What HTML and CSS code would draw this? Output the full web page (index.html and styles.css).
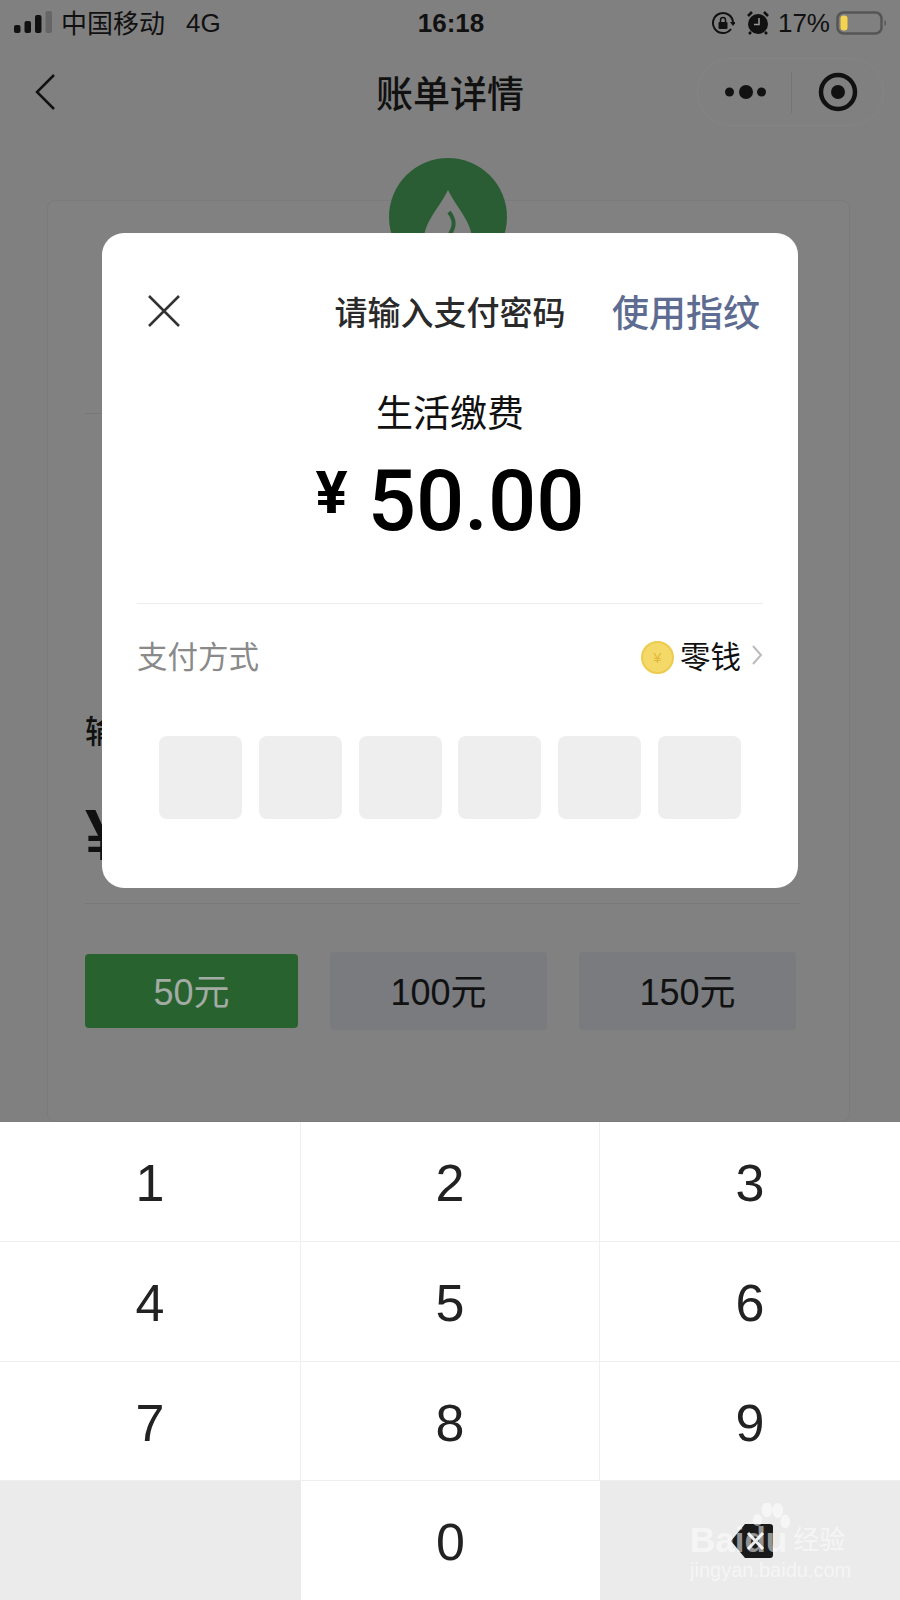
FILE: index.html
```html
<!DOCTYPE html>
<html lang="zh-CN">

<head>
    <meta charset="UTF-8">
    <meta name="viewport" content="width=device-width, initial-scale=1.0">
    <title>账单详情</title>
    <link rel="stylesheet" href="styles.css">
</head>

<body>
    <div class="phone">
        <div class="page">
            <div class="statusBar">
                <div class="statusLeft">
                    <svg class="signal" width="38" height="24" viewBox="0 0 38 24">
                        <rect x="0" y="14" width="6.5" height="8" rx="2" fill="#111"/>
                        <rect x="10.5" y="10" width="6.5" height="12" rx="2" fill="#111"/>
                        <rect x="21" y="4" width="6.5" height="18" rx="2" fill="#111"/>
                        <rect x="31.5" y="0" width="6.5" height="22" rx="2" fill="#666"/>
                    </svg>
                    <span class="carrier">中国移动</span>
                    <span class="network">4G</span>
                </div>
                <div class="clock">16:18</div>
                <div class="statusRight">
                    <svg width="24" height="24" viewBox="0 0 24 24" fill="none">
                        <path d="M20 18A10 10 0 1 1 22 12" stroke="#111" stroke-width="2"/>
                        <path d="M19 11h6l-3 4z" fill="#111"/>
                        <rect x="7.5" y="11" width="9" height="7" rx="1" fill="#111"/>
                        <path d="M9.5 11V9a2.5 2.5 0 0 1 5 0v2" stroke="#111" stroke-width="1.5"/>
                    </svg>
                    <svg class="alarm" width="22" height="24" viewBox="0 0 22 24" fill="none">
                        <circle cx="11" cy="13" r="10" fill="#111"/>
                        <path d="M12 7v6.5h-5" stroke="#999" stroke-width="1.5"/>
                        <path d="M1 5l4-4M21 5l-4-4M4 21l-2 2M18 21l2 2" stroke="#111" stroke-width="2.5"/>
                    </svg>
                    <span class="percent">17%</span>
                    <svg width="52" height="24" viewBox="0 0 52 24" fill="none">
                        <rect x="1.5" y="1.5" width="44" height="21" rx="6" stroke="#555" stroke-width="2.5"/>
                        <rect x="4.5" y="4.5" width="7" height="15" rx="3" fill="#f5d34f"/>
                        <path d="M48.5 9c2 1 2 5 0 6z" fill="#555"/>
                    </svg>
                </div>
            </div>
            <div class="navBar">
                <svg class="backIcon" width="22" height="38" viewBox="0 0 22 38" fill="none">
                    <path d="M20 2L3 19l17 17" stroke="#111" stroke-width="2.5"/>
                </svg>
                <div class="navTitle">账单详情</div>
                <div class="capsule">
                    <svg width="41" height="16" viewBox="0 0 41 16">
                        <circle cx="4.5" cy="8" r="4.5" fill="#111"/>
                        <circle cx="21" cy="8" r="7" fill="#111"/>
                        <circle cx="36.5" cy="8" r="4.5" fill="#111"/>
                    </svg>
                    <div class="capsuleLine"></div>
                    <svg class="targetIcon" width="40" height="40" viewBox="0 0 40 40" fill="none">
                        <circle cx="20" cy="20" r="17" stroke="#111" stroke-width="4.5"/>
                        <circle cx="20" cy="20" r="7" fill="#111"/>
                    </svg>
                </div>
            </div>
            <div class="billCard">
                <div class="billIcon">
                    <svg class="dropIcon" width="52" height="78" viewBox="0 0 52 78">
                        <path d="M26 0C36 20 50 32 50 50A24 24 0 0 1 2 50C2 32 16 20 26 0z" fill="#808080"/>
                        <path d="M27 22c6 8 6 14 1 22" stroke="#2b5d35" stroke-width="4" fill="none"/>
                    </svg>
                </div>
                <div class="billLine"></div>
                <div class="inputLabel">输入金额</div>
                <div class="inputAmount">¥</div>
                <div class="amountBtns">
                    <div class="amountBtn amountBtnOn">50元</div>
                    <div class="amountBtn">100元</div>
                    <div class="amountBtn">150元</div>
                </div>
            </div>
            <div class="payModal">
                <div class="modalHead">
                    <svg class="closeIcon" width="34" height="34" viewBox="0 0 34 34" fill="none">
                        <path d="M1 2l30 30M31 2L1 32" stroke="#333" stroke-width="2.5"/>
                    </svg>
                    <div class="modalTitle">请输入支付密码</div>
                    <div class="useFinger">使用指纹</div>
                </div>
                <div class="payName">生活缴费</div>
                <div class="payMoney"><span class="yen">¥</span><span class="money">50.00</span></div>
                <div class="payWay">
                    <div class="payWayLabel">支付方式</div>
                    <div class="payWayValue">
                        <div class="coin">¥</div>
                        <span>零钱</span>
                        <svg width="12" height="22" viewBox="0 0 12 22" fill="none">
                            <path d="M2 2l8 9-8 9" stroke="#bbb" stroke-width="2"/>
                        </svg>
                    </div>
                </div>
                <div class="pinRow">
                    <div class="pinBox"></div>
                    <div class="pinBox"></div>
                    <div class="pinBox"></div>
                    <div class="pinBox"></div>
                    <div class="pinBox"></div>
                    <div class="pinBox"></div>
                </div>
            </div>
        </div>
        <div class="keyboard">
            <div class="key">1</div>
            <div class="key">2</div>
            <div class="key">3</div>
            <div class="key">4</div>
            <div class="key">5</div>
            <div class="key">6</div>
            <div class="key">7</div>
            <div class="key">8</div>
            <div class="key">9</div>
            <div class="key keyGray"></div>
            <div class="key keyZero">0</div>
            <div class="key keyGray">
                <svg class="backspace" width="42" height="36" viewBox="0 0 42 36">
                    <path d="M14 1h25a3 3 0 0 1 3 3v28a3 3 0 0 1-3 3H14L0 18z" fill="#1a1a1a"/>
                    <path d="M17 10l15 16M32 10L17 26" stroke="#ebebeb" stroke-width="3"/>
                </svg>
            </div>
        </div>
        <div class="watermark">
            <svg class="paw" width="42" height="34" viewBox="0 0 56 50" fill="#fff" fill-opacity=".55">
                <ellipse cx="8" cy="25" rx="7" ry="9"/>
                <ellipse cx="22" cy="10" rx="8" ry="11"/>
                <ellipse cx="38" cy="11" rx="8" ry="11"/>
                <ellipse cx="49" cy="27" rx="7" ry="10"/>
            </svg>
            <div class="markTop"><span class="markBrand">Baidu</span><span class="markCn">经验</span></div>
            <div class="markUrl">jingyan.baidu.com</div>
        </div>
    </div>
</body>

</html>
```

FILE: styles.css
```css
* {
    box-sizing: border-box;
    padding: 0;
    margin: 0;
}

body {
    width: 900px;
    height: 1600px;
    overflow: hidden;
    font-family: "Liberation Sans", "Noto Sans CJK SC", sans-serif;
    color: #111;
}

.phone {
    position: relative;
    display: flex;
    flex-direction: column;
    height: 1600px;
}

.page {
    position: relative;
    height: 1122px;
    background-color: #808080;
    overflow: hidden;
}

.statusBar {
    display: flex;
    align-items: center;
    justify-content: space-between;
    height: 46px;
    padding: 0 12px 0 14px;
}

.statusLeft,
.statusRight {
    display: flex;
    align-items: center;
    width: 300px;
    font-size: 26px;
}

.statusRight {
    justify-content: flex-end;
}

.carrier {
    margin-left: 9px;
    margin-bottom: 3px;
}

.network {
    margin-left: 21px;
}

.clock {
    font-size: 26px;
    font-weight: 700;
}

.alarm {
    margin-left: 12px;
}

.percent {
    margin-left: 9px;
    margin-right: 6px;
    font-size: 26px;
}

.navBar {
    position: relative;
    display: flex;
    align-items: center;
    justify-content: space-between;
    height: 92px;
    margin-bottom: 62px;
    padding: 0 16px 0 34px;
}

.navTitle {
    position: absolute;
    left: 0;
    right: 0;
    text-align: center;
    font-size: 37px;
    font-weight: 500;
}

.capsule {
    display: flex;
    align-items: center;
    width: 187px;
    height: 68px;
    padding-left: 27px;
    border: 1px solid #858585;
    border-radius: 34px;
}

.capsuleLine {
    width: 1px;
    height: 41px;
    margin-left: 25px;
    background-color: #747474;
}

.targetIcon {
    margin-left: 26px;
}

.billCard {
    position: relative;
    height: 922px;
    margin: 0 50px 0 47px;
    padding: 0 37px;
    background-color: #818181;
    border: 1px solid #7b7b7b;
    border-radius: 8px;
}

.billIcon {
    position: absolute;
    left: 341px;
    top: -43px;
    display: flex;
    align-items: center;
    justify-content: center;
    width: 118px;
    height: 118px;
    background-color: #2b5d35;
    border-radius: 50%;
}

.dropIcon {
    margin-top: 24px;
}

.billLine {
    height: 1px;
    margin-top: 212px;
    margin-right: 20px;
    background-color: #787878;
}

.inputLabel {
    margin-top: 298px;
    font-size: 32px;
    line-height: 40px;
    font-weight: 500;
}

.inputAmount {
    height: 114px;
    margin-top: 38px;
    margin-right: 12px;
    padding-top: 3px;
    font-size: 72px;
    line-height: 84px;
    font-weight: 700;
    border-bottom: 1px solid #787878;
}

.amountBtns {
    display: flex;
    align-items: center;
    justify-content: space-between;
    margin-top: 48px;
    margin-right: 16px;
}

.amountBtn {
    display: flex;
    align-items: center;
    justify-content: center;
    width: 217px;
    height: 78px;
    padding-bottom: 5px;
    font-size: 36px;
    background-color: #797b7f;
    border-radius: 4px;
}

.amountBtnOn {
    width: 213px;
    height: 74px;
    color: #a3aca4;
    background-color: #28622f;
}

.payModal {
    position: absolute;
    left: 102px;
    top: 233px;
    width: 696px;
    height: 655px;
    padding: 0 35px;
    background-color: #fff;
    border-radius: 22px;
}

.modalHead {
    position: relative;
    display: flex;
    align-items: center;
    justify-content: space-between;
    height: 34px;
    margin-top: 61px;
    padding-left: 11px;
}

.modalTitle {
    position: absolute;
    left: 0;
    right: 0;
    text-align: center;
    font-size: 33px;
    font-weight: 500;
    color: #2a2a2a;
}

.useFinger {
    position: relative;
    margin-right: 3px;
    font-size: 37px;
    font-weight: 500;
    color: #5e6c92;
}

.payName {
    margin-top: 62px;
    text-align: center;
    font-size: 37px;
    line-height: 50px;
    color: #111;
}

.payMoney {
    display: flex;
    align-items: center;
    justify-content: center;
    height: 112px;
    margin-top: 5px;
    line-height: 112px;
    font-family: Roboto, sans-serif;
    font-weight: 500;
    color: #000;
}

.yen {
    margin-right: 20px;
    margin-bottom: 16px;
    font-size: 60px;
    font-weight: 700;
}

.money {
    font-size: 85px;
}

.payWay {
    display: flex;
    align-items: center;
    justify-content: space-between;
    height: 106px;
    margin-top: 46px;
    padding-bottom: 4px;
    border-top: 1px solid #ececec;
}

.payWayLabel {
    font-size: 30.5px;
    color: #8a8a8a;
}

.payWayValue {
    display: flex;
    align-items: center;
    gap: 6px;
    font-size: 30.5px;
}

.coin {
    display: flex;
    align-items: center;
    justify-content: center;
    width: 33px;
    height: 33px;
    margin-top: 6px;
    font-size: 14px;
    color: #e0b83a;
    background-color: #f4d968;
    border: 2px solid #eccb4f;
    border-radius: 50%;
}

.payWayValue svg {
    margin-left: 4px;
}

.pinRow {
    display: flex;
    justify-content: space-between;
    margin: 27px 22px 0;
}

.pinBox {
    width: 83px;
    height: 83px;
    background-color: #eeeeee;
    border-radius: 8px;
}

.keyboard {
    display: grid;
    flex: 1;
    grid-template-columns: 301px 299px 300px;
    grid-template-rows: 120px 120px 119px 119px;
    background-color: #fff;
}

.key {
    display: flex;
    align-items: center;
    justify-content: center;
    padding-top: 3px;
    font-size: 52px;
    color: #222;
    border-right: 1px solid #efefef;
    border-bottom: 1px solid #efefef;
}

.key:nth-child(3n) {
    border-right: 0;
}

.keyZero {
    border-bottom: 0;
    border-right: 0;
}

.keyGray {
    padding-top: 0;
    background-color: #ebebeb;
    border: 0;
}

.backspace {
    margin-left: 4px;
}

.watermark {
    position: absolute;
    left: 690px;
    top: 1503px;
    width: 170px;
    color: rgba(255, 255, 255, 0.55);
}

.paw {
    position: absolute;
    left: 60px;
    top: 0;
}

.markTop {
    display: flex;
    align-items: center;
    margin-top: 19px;
    line-height: 36px;
    white-space: nowrap;
}

.markBrand {
    font-size: 35px;
    font-weight: 700;
}

.markCn {
    margin-left: 6px;
    font-size: 26px;
}

.markUrl {
    font-size: 20px;
    line-height: 24px;
    white-space: nowrap;
}
```
